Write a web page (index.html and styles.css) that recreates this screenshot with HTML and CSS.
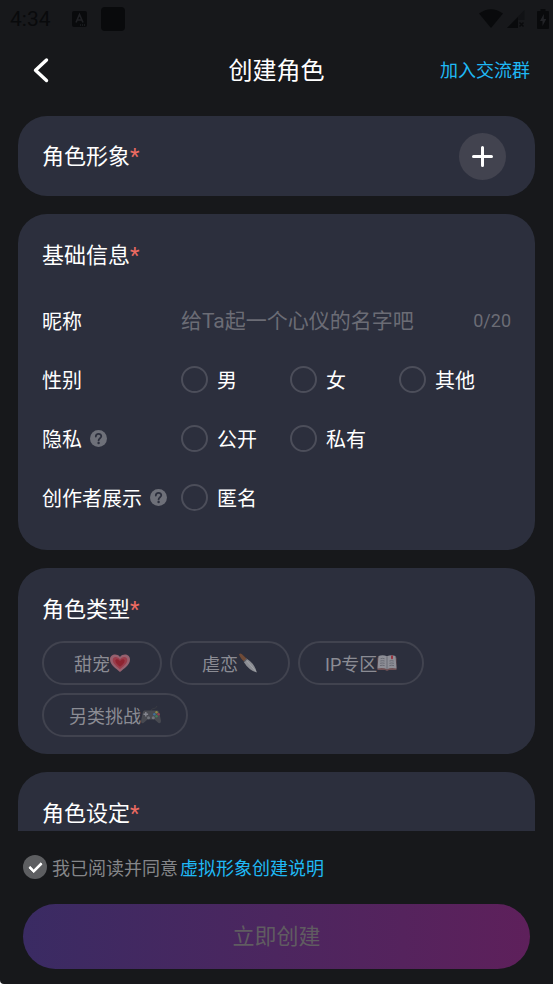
FILE: index.html
```html
<!DOCTYPE html>
<html lang="zh-CN">
<head>
<meta charset="utf-8">
<meta name="viewport" content="width=device-width, initial-scale=1">
<title>创建角色</title>
<link rel="stylesheet" href="styles.css">
</head>
<body>
<div class="status">
  <span class="clock">4:34</span>
  <svg class="status-app" width="15" height="16" viewBox="0 0 15 16" aria-hidden="true"><rect width="15" height="16" rx="2" fill="#090a0c"/><path d="M4 11.5 7.500 3.500 11 11.500M5.300 9h4.400" fill="none" stroke="#202125" stroke-width="1.600"/><path d="M8 14h1m1 0h1m1 0h1" stroke="#292a2e"/></svg>
  <span class="status-square"></span>
  <svg class="status-wifi" width="24" height="19" viewBox="0 0 24 19" aria-hidden="true"><path d="M0 4.500Q12-4 24 4.500L12 19Z" fill="#090a0c"/></svg>
  <svg class="status-signal" width="18" height="19" viewBox="0 0 18 19" aria-hidden="true"><path d="M0 19 17.500 1v10H11v8Z" fill="#111215"/><path d="M0 19 11 8v11Z" fill="#090a0c"/><path d="m12.500 13.500 4 4m0-4-4 4" stroke="#090a0c" stroke-width="1.400"/></svg>
  <svg class="status-battery" width="12" height="20" viewBox="0 0 12 20" aria-hidden="true"><path d="M3.500 0h5v2H11q1 0 1 1v16q0 1-1 1H1q-1 0-1-1V3q0-1 1-1h2.500Z" fill="#090a0c"/><path d="M6.800 5 3 12h2.500v5L9.300 10H6.800Z" fill="#222327"/></svg>
</div>
<header class="topbar">
  <button class="back" type="button" aria-label="返回"><svg width="18" height="26" viewBox="0 0 18 26"><path d="M15.500 3 4.500 13.300l11 10.200" fill="none" stroke="#fff" stroke-width="3.400" stroke-linecap="round" stroke-linejoin="round"/></svg></button>
  <h1>创建角色</h1>
  <a class="group-link" href="#group">加入交流群</a>
</header>
<main class="content">
  <section class="card card-avatar">
    <h2>角色形象<span class="req">*</span></h2>
    <button class="add" type="button" aria-label="添加角色形象"><svg width="23" height="23" viewBox="0 0 23 23"><path d="M11.500 2.500v18M2.500 11.500h18" stroke="#fff" stroke-width="3" stroke-linecap="round"/></svg></button>
  </section>
  <section class="card card-info">
    <h2>基础信息<span class="req">*</span></h2>
    <div class="rows">
      <div class="row">
        <label class="name" for="nick">昵称</label>
        <input class="nick" id="nick" type="text" maxlength="20" placeholder="给Ta起一个心仪的名字吧">
        <output class="count" for="nick">0/20</output>
      </div>
      <div class="row" role="radiogroup" aria-labelledby="l-sex">
        <span class="name" id="l-sex">性别</span>
        <div class="options">
          <label class="option"><input type="radio" name="sex">男</label>
          <label class="option"><input type="radio" name="sex">女</label>
          <label class="option"><input type="radio" name="sex">其他</label>
        </div>
      </div>
      <div class="row" role="radiogroup" aria-labelledby="l-priv">
        <span class="name"><span id="l-priv">隐私</span><button class="help" type="button" aria-label="隐私说明"><svg width="17" height="17" viewBox="0 0 17 17"><circle cx="8.500" cy="8.500" r="8.500" fill="#6e7079"/><path d="M5.800 6.500C5.900 2.900 11.400 3 11.300 6.300 11.200 8.200 8.600 8.200 8.600 10.400" fill="none" stroke="#2c2f3d" stroke-width="1.800" stroke-linecap="round"/><circle cx="8.600" cy="13" r="1.200" fill="#2c2f3d"/></svg></button></span>
        <div class="options">
          <label class="option"><input type="radio" name="privacy">公开</label>
          <label class="option"><input type="radio" name="privacy">私有</label>
        </div>
      </div>
      <div class="row" role="radiogroup" aria-labelledby="l-author">
        <span class="name"><span id="l-author">创作者展示</span><button class="help" type="button" aria-label="创作者展示说明"><svg width="17" height="17" viewBox="0 0 17 17"><circle cx="8.500" cy="8.500" r="8.500" fill="#6e7079"/><path d="M5.800 6.500C5.900 2.900 11.400 3 11.300 6.300 11.200 8.200 8.600 8.200 8.600 10.400" fill="none" stroke="#2c2f3d" stroke-width="1.800" stroke-linecap="round"/><circle cx="8.600" cy="13" r="1.200" fill="#2c2f3d"/></svg></button></span>
        <div class="options">
          <label class="option"><input type="radio" name="author">匿名</label>
        </div>
      </div>
    </div>
  </section>
  <section class="card card-type">
    <h2>角色类型<span class="req">*</span></h2>
    <div class="chips">
      <button class="chip" type="button">甜宠<svg width="20" height="20" viewBox="0 0 20 20" aria-hidden="true"><path d="M10 19C6 15.500 0 12 0 6.500 0 1 7 0 10 4 13 0 20 1 20 6.500 20 12 14 15.500 10 19Z" fill="#96616f"/><path d="M10 16.300C7 13.500 2.700 11 2.700 7 2.700 3 8 3 10 6.500 12 3 17.300 3 17.300 7 17.300 11 13 13.500 10 16.300Z" fill="#9a3c4b"/><path d="M10 13.800C8 12 5.300 10.200 5.300 7.800 5.300 5.500 9 5.500 10 8.300 11 5.500 14.700 5.500 14.700 7.800 14.700 10.200 12 12 10 13.800Z" fill="#8d2431"/></svg></button>
      <button class="chip" type="button">虐恋<svg width="20" height="20" viewBox="0 0 20 20" aria-hidden="true"><path d="M1 1.500Q2-.2 4 1.200L9.500 6.500 6.800 9Q3.500 7 1 1.500Z" fill="#704b37"/><path d="M8.800 5.800Q17 11 18.800 19.500 11 17.500 5.800 9Z" fill="#8c8e94"/><path d="m8.500 7.500 9.300 10.800" stroke="#a2a4a9"/><path d="m6 8.800 3-3" stroke="#5c5d64" stroke-width="1.300"/></svg></button>
      <button class="chip" type="button">IP专区<svg width="20" height="20" viewBox="0 0 20 20" aria-hidden="true"><path d="M.5 4.500h19v12.500H12l-2 1-2-1H.5Z" fill="#6d5054"/><path d="M1.500 3Q6 1.300 10 3.300 14 1.300 18.500 3L19.500 15.500Q14 14 10 16.300 6 14 .5 15.500Z" fill="#8d8e96"/><path d="M10 3.500v12.500M3.500 5.700q2-.7 4 0M3.300 8q2.200-.7 4.300 0M3.100 10.300q2.300-.7 4.500 0M3 12.600q2.400-.7 4.600 0M12.400 8q2.200-.7 4.300 0M12.400 10.300q2.200-.7 4.500 0M12.400 12.600q2.200-.7 4.600 0" fill="none" stroke="#696b74"/><path d="M14 2.400h2v4l-1-.8-1 .8Z" fill="#983440"/></svg></button>
      <button class="chip" type="button">另类挑战<svg width="20" height="20" viewBox="0 0 20 20" aria-hidden="true"><path d="M10 6Q10 3.500 13 3.500 15 3.500 16 1" fill="none" stroke="#393b43"/><path d="M3.500 5.500H16.500Q18 5.700 18.700 9.500L20 16Q19.700 19 17.500 18L13.500 14.500H6.500L2.500 18Q.2 19 0 16L1.300 9.500Q2 5.700 3.500 5.500Z" fill="#484a51"/><path d="M4.800 7v4.500M2.500 9.200h4.600" stroke="#858790" stroke-width="1.400"/><circle cx="15.500" cy="7.300" r="1.200" fill="#8d8845"/><circle cx="17.600" cy="9.300" r="1.200" fill="#95404a"/><circle cx="13.400" cy="9.300" r="1.200" fill="#3f719b"/><circle cx="15.500" cy="11.300" r="1.200" fill="#417b57"/><circle cx="7.500" cy="12.800" r="1.500" fill="#71747b"/><circle cx="12.300" cy="12.800" r="1.500" fill="#71747b"/></svg></button>
    </div>
  </section>
  <section class="card card-setting">
    <h2>角色设定<span class="req">*</span></h2>
  </section>
</main>
<footer class="bottom">
  <div class="agree">
    <input class="tick" id="agree" type="checkbox" checked>
    <label for="agree">我已阅读并同意</label>
    <a href="#notice">虚拟形象创建说明</a>
  </div>
  <button class="submit" type="button">立即创建</button>
</footer>
</body>
</html>
```
FILE: styles.css
```css
*,
*::before {
  box-sizing: border-box;
}

html {
  background: #fff;
}

body {
  display: flex;
  flex-direction: column;
  height: 100vh;
  margin: 0;
  border-bottom-left-radius: 4px;
  background: #17181b;
  color: #fff;
  font-family: Roboto, "Noto Sans CJK SC", sans-serif;
  font-size: 18px;
}

button,
input {
  margin: 0;
  padding: 0;
  border: 0;
  background: none;
  color: inherit;
  font: inherit;
}

svg {
  display: block;
  flex: none;
}

a {
  color: #1fb9f5;
  text-decoration: none;
}

h1,
h2 {
  margin: 0;
  font-weight: 400;
}

/* Status bar */
.status {
  display: flex;
  flex: none;
  align-items: center;
  height: 37px;
  padding: 0 4px 0 10px;
  color: #090a0c;
}

.clock {
  width: 62px;
  font-size: 21px;
}

.status-square {
  width: 24px;
  height: 24px;
  margin-left: 14px;
  border-radius: 4px;
  background: #090a0c;
}

.status-wifi {
  margin-left: auto;
}

.status-signal {
  margin: 0 12px 0 4px;
}

/* Title bar */
.topbar {
  display: grid;
  flex: none;
  grid-template-columns: 1fr auto 1fr;
  align-items: center;
  height: 66px;
  padding: 0 23px 0 31px;
}

.back {
  justify-self: start;
}

.topbar h1 {
  margin-right: 8px;
  padding-bottom: 4px;
  font-size: 24px;
}

.group-link {
  justify-self: end;
  padding-bottom: 2px;
}

/* Cards */
.content {
  display: flex;
  flex: 1;
  flex-direction: column;
  gap: 18px;
  min-height: 0;
  margin-top: 13px;
  padding: 0 18px;
  overflow: hidden;
}

.card {
  flex: none;
  padding: 24px;
  border-radius: 29px;
  background: #2c2f3d;
}

.card h2 {
  font-size: 22px;
  line-height: 36px;
}

.req {
  color: #ed6b62;
}

.card-avatar {
  display: flex;
  align-items: center;
  justify-content: space-between;
  padding: 17px 29px 16px 24px;
}

.add {
  display: grid;
  place-items: center;
  width: 47px;
  height: 47px;
  border-radius: 50%;
  background: #42434f;
}

.card-info {
  padding-bottom: 23px;
}

.rows {
  margin-top: 17px;
}

.row {
  display: flex;
  align-items: center;
  height: 59px;
  font-size: 20px;
}

.name {
  display: flex;
  flex: none;
  align-items: center;
  gap: 8px;
  width: 139px;
}

.nick {
  flex: 1;
  min-width: 0;
  outline: none;
  font-size: 21px;
}

.nick::placeholder {
  color: #6b6c75;
  opacity: 1;
}

.count {
  color: #6b6c75;
  font-size: 18px;
}

.options {
  display: flex;
}

.option {
  display: flex;
  align-items: center;
  gap: 9px;
  width: 109px;
}

.option input {
  width: 27px;
  height: 27px;
  border: 2px solid #4c4e5a;
  border-radius: 50%;
  appearance: none;
}

.option input:checked {
  border-width: 8px;
  border-color: #1fb9f5;
}

.card-type {
  padding-bottom: 17px;
}

.chips {
  display: flex;
  flex-wrap: wrap;
  gap: 8px;
  margin-top: 13px;
}

.chip {
  display: flex;
  align-items: center;
  justify-content: center;
  min-width: 120px;
  height: 44px;
  padding: 0 25px;
  border: 2px solid #41434f;
  border-radius: 22px;
  color: #8b8c94;
}

.card-setting {
  min-height: 186px;
}

/* Agreement and submit */
.bottom {
  flex: none;
  padding: 17px 23px 15px;
}

.agree {
  display: flex;
  align-items: center;
  height: 38px;
  color: #858689;
}

.agree label {
  margin: 0 2px 0 5px;
}

.tick {
  width: 24px;
  height: 24px;
  border-radius: 50%;
  background: #5d5e61;
  appearance: none;
}

.tick:checked::before {
  display: block;
  width: 13px;
  height: 8px;
  margin: 7px 0 0 6px;
  border: solid #fff;
  border-width: 0 0 3px 3px;
  border-radius: 1px;
  content: "";
  transform: rotate(-45deg);
}

.submit {
  display: block;
  width: 100%;
  height: 65px;
  margin-top: 18px;
  padding-bottom: 5px;
  border-radius: 33px;
  background: linear-gradient(90deg, #3a2b63, #4c265f 50%, #5e205b);
  color: #605c61;
  font-size: 22px;
}
```
